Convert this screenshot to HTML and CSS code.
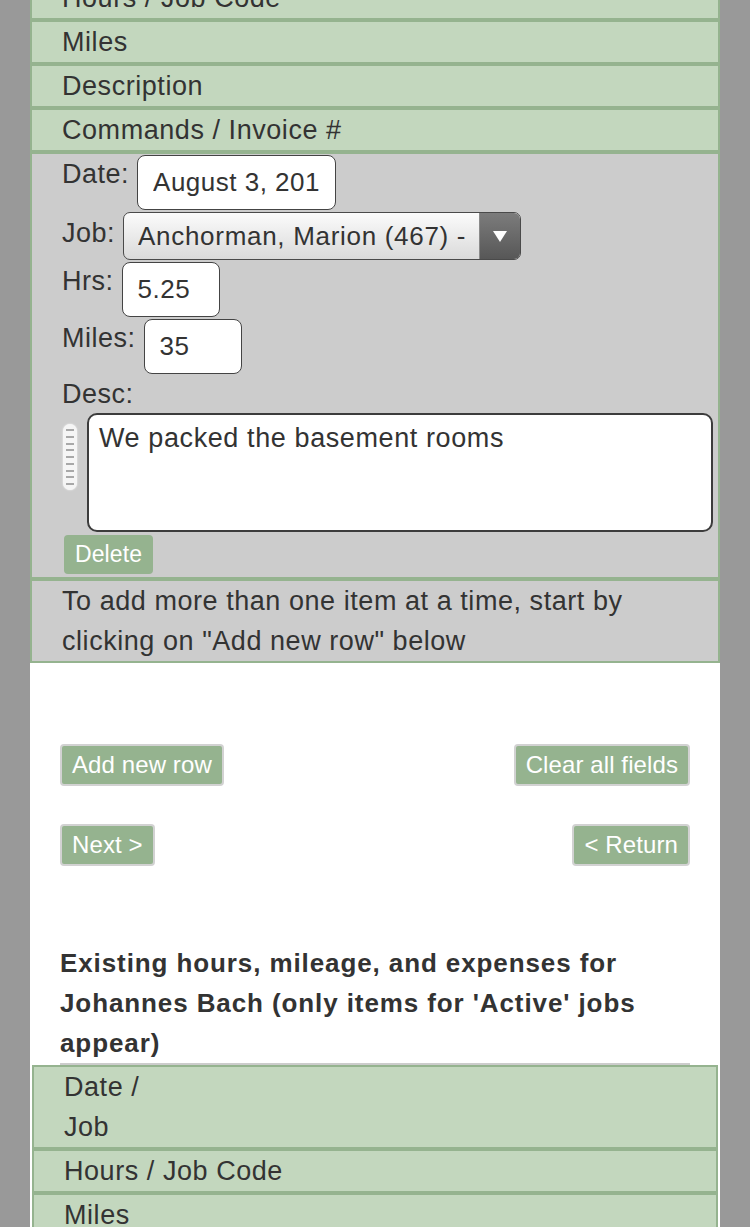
FILE: index.html
```html
<!DOCTYPE html>
<html lang="en">
<head>
<meta charset="utf-8">
<title>Hours and Mileage</title>
<link rel="stylesheet" href="styles.css">
</head>
<body>
<div class="page">
  <div class="grid top-grid">
    <div class="cell">Hours / Job Code</div>
    <div class="cell">Miles</div>
    <div class="cell">Description</div>
    <div class="cell">Commands / Invoice #</div>
    <div class="cell form">
      <div class="field">
        <label class="lbl" for="f-date">Date:</label>
        <input class="txt date" id="f-date" type="text" value="August 3, 2013">
      </div>
      <div class="field">
        <label class="lbl lbl-job" for="f-job">Job:</label>
        <div class="select">
          <select id="f-job"><option>Anchorman, Marion (467) -</option></select>
          <span class="arrow"><span class="tri"></span></span>
        </div>
      </div>
      <div class="field">
        <label class="lbl" for="f-hrs">Hrs:</label>
        <input class="txt num" id="f-hrs" type="text" value="5.25">
      </div>
      <div class="field">
        <label class="lbl" for="f-miles">Miles:</label>
        <input class="txt num" id="f-miles" type="text" value="35">
      </div>
      <label class="lbl desc-lbl" for="f-desc">Desc:</label>
      <div class="desc-row">
        <span class="handle"><i></i><i></i><i></i><i></i><i></i><i></i><i></i><i></i><i></i></span>
        <textarea id="f-desc" class="desc">We packed the basement rooms</textarea>
      </div>
      <button class="btn btn-delete" type="button">Delete</button>
    </div>
    <div class="cell note">To add more than one item at a time, start by clicking on "Add new row" below</div>
  </div>

  <div class="actions">
    <div class="btn-row">
      <button class="btn" type="button">Add new row</button>
      <button class="btn" type="button">Clear all fields</button>
    </div>
    <div class="btn-row">
      <button class="btn" type="button">Next &gt;</button>
      <button class="btn" type="button">&lt; Return</button>
    </div>
  </div>

  <h3 class="heading">Existing hours, mileage, and expenses for Johannes Bach (only items for 'Active' jobs appear)</h3>

  <div class="grid bottom-grid">
    <div class="cell">Date /<br>Job</div>
    <div class="cell">Hours / Job Code</div>
    <div class="cell">Miles</div>
    <div class="cell">Description</div>
    <div class="cell">Commands / Invoice #</div>
  </div>
</div>
</body>
</html>
```

FILE: styles.css
```css
html, body {
  margin: 0;
  padding: 0;
}

body {
  background: #999999;
  font-family: "Liberation Sans", Arial, sans-serif;
  color: #333333;
  overflow: hidden;
}

.page {
  margin: -24px 30px 0;
  background: #ffffff;
  min-height: 1400px;
}

.grid {
  display: flex;
  flex-direction: column;
}

.bottom-grid {
  margin: 0 2px;
}

.cell {
  border: 2px solid #95b38f;
  background: #c3d7be;
  padding: 0 30px;
  font-size: 27px;
  letter-spacing: 0.55px;
  line-height: 40px;
}

.cell.form,
.cell.note {
  background: #cccccc;
}

.cell.form {
  padding: 0 5px 3px 30px;
  display: flex;
  flex-direction: column;
  align-items: flex-start;
}

.field {
  display: flex;
  align-items: flex-start;
  gap: 8px;
}

.lbl {
  font-size: 27px;
  letter-spacing: 0.5px;
  line-height: 40px;
}

.lbl-job {
  padding-top: 2px;
}

.txt {
  box-sizing: border-box;
  margin: 1px 0;
  height: 55px;
  border: 1.5px solid #444444;
  border-radius: 8px;
  background: #ffffff;
  font-family: "Liberation Sans", Arial, sans-serif;
  font-size: 26px;
  letter-spacing: 0.5px;
  color: #333333;
  padding: 0 10px 0 15px;
  outline: none;
}

.txt.date {
  width: 199px;
  padding-right: 15px;
}

.txt.num {
  width: 98px;
}

.select {
  box-sizing: border-box;
  margin: 1px 0;
  width: 398px;
  height: 48px;
  display: flex;
  border: 1.5px solid #4a4a4a;
  border-radius: 7px;
  overflow: hidden;
  background: linear-gradient(#fbfbfb, #dadada);
}

.select select {
  flex: 1;
  min-width: 0;
  appearance: none;
  -webkit-appearance: none;
  border: 0;
  background: transparent;
  font-family: "Liberation Sans", Arial, sans-serif;
  font-size: 26px;
  letter-spacing: 0.7px;
  color: #333333;
  padding: 0 0 0 14px;
  outline: none;
}

.arrow {
  width: 40px;
  flex: none;
  display: flex;
  align-items: center;
  justify-content: center;
  background: linear-gradient(#7c7c7c, #575757);
  border-left: 1px solid #8a8a8a;
}

.tri {
  width: 0;
  height: 0;
  border-left: 7px solid transparent;
  border-right: 7px solid transparent;
  border-top: 11px solid #ffffff;
}

.desc-lbl {
  line-height: 38px;
}

.desc-row {
  display: flex;
  align-items: flex-start;
  gap: 10px;
  align-self: stretch;
}

.handle {
  margin: 11px 0 0 1px;
  box-sizing: border-box;
  width: 14px;
  height: 66px;
  padding: 5px 3px;
  border-radius: 7px;
  background: #f5f5f5;
  box-shadow: 0 0 2px rgba(255, 255, 255, 0.9);
  display: flex;
  flex-direction: column;
  justify-content: space-between;
}

.handle i {
  display: block;
  height: 2px;
  background: #a8a8a8;
}

.desc {
  flex: 1;
  box-sizing: border-box;
  height: 119px;
  border: 2px solid #3c3c3c;
  border-radius: 10px;
  background: #ffffff;
  padding: 7px 10px;
  font-family: "Liberation Sans", Arial, sans-serif;
  font-size: 27px;
  letter-spacing: 0.6px;
  line-height: 32px;
  color: #333333;
  resize: none;
  outline: none;
}

.btn {
  box-sizing: border-box;
  height: 42px;
  padding: 0 10px;
  border: 2px solid #d2d2d2;
  border-radius: 4px;
  background: #95b38f;
  color: #ffffff;
  font-family: "Liberation Sans", Arial, sans-serif;
  font-size: 24px;
  letter-spacing: 0.1px;
  line-height: 38px;
}

.btn-delete {
  margin: 3px 0 0 2px;
  height: 39px;
  border: 0;
  padding: 0 11px;
  font-size: 23px;
  line-height: 39px;
}

.actions {
  padding: 81px 30px 0;
  display: flex;
  flex-direction: column;
  gap: 38px;
}

.btn-row {
  display: flex;
  justify-content: space-between;
}

.heading {
  margin: 77px 30px 0;
  padding: 0;
  font-size: 26px;
  letter-spacing: 0.9px;
  line-height: 40px;
  font-weight: bold;
  color: #333333;
  border-bottom: 2px solid #cccccc;
}
```
